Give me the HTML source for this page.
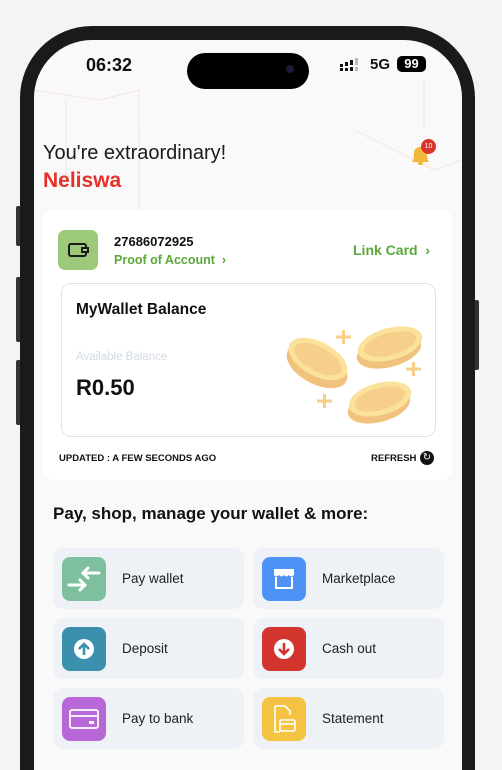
<!DOCTYPE html>
<html style="width:502px;height:770px;overflow:hidden"><head><style>
*{margin:0;padding:0;box-sizing:border-box}
body{width:502px;height:770px;background:#f4f4f4;overflow:hidden;font-family:"Liberation Sans","DejaVu Sans",sans-serif}
#wrap{position:relative;width:502px;height:770px;overflow:hidden}
.frame{position:absolute;left:20px;top:26px;width:455px;height:744px;background:#1a1a1a;border-radius:72px 72px 0 0;}
.screen{position:absolute;left:34px;top:40px;width:428px;height:730px;background:#f9f9f9;border-radius:58px 58px 0 0;overflow:hidden}
.btn{position:absolute;background:#333;width:5px;border-radius:2px}
.a{position:absolute}
.tile{position:absolute;width:191px;height:61px;background:#eef1f5;border-radius:10px}
.tile .ic{position:absolute;left:9px;top:9px;width:44px;height:44px;border-radius:8px}
.tile .t{position:absolute;left:69px;top:23px;font-size:13.5px;color:#1e1e1e}
</style></head><body><div id="wrap">
<div class="btn" style="left:16px;top:206px;height:40px"></div>
<div class="btn" style="left:16px;top:277px;height:65px"></div>
<div class="btn" style="left:16px;top:360px;height:65px"></div>
<div class="btn" style="left:474px;top:300px;height:70px"></div>
<div class="frame"></div>
<div class="screen">
<svg class="a" style="left:0;top:0" width="428" height="760"><g fill="none" stroke="#f6e6e3" stroke-width="1.2"><path d="M0 50 L65 60 L105 50 M32 60 L32 140 M105 50 L105 170"/><path d="M320 90 L400 130 L428 120 M390 40 L390 90"/></g></svg>
</div>
<div class="a" style="left:86px;top:55px;font-size:18px;font-weight:bold;color:#111">06:32</div>
<div class="a" style="left:187px;top:53px;width:122px;height:36px;background:#000;border-radius:18px"></div>
<div class="a" style="left:286px;top:65px;width:8px;height:8px;background:#1a1a3a;border-radius:50%"></div>
<svg class="a" style="left:340px;top:58px" width="22" height="14"><g fill="#111"><rect x="0" y="6" width="3" height="3"/><rect x="0" y="10" width="3" height="3"/><rect x="5" y="4" width="3" height="4"/><rect x="5" y="10" width="3" height="3"/><rect x="10" y="2" width="3" height="5"/><rect x="10" y="9" width="3" height="4"/></g><g fill="#bbb"><rect x="15" y="0" width="3" height="7"/><rect x="15" y="9" width="3" height="4"/></g></svg>
<div class="a" style="left:370px;top:56px;font-size:15px;font-weight:bold;color:#111">5G</div>
<div class="a" style="left:397px;top:56px;width:29px;height:16px;background:#000;border-radius:5px;color:#fff;font-size:13px;font-weight:bold;text-align:center;line-height:16px">99</div>
<div class="a" style="left:43px;top:142px;font-size:20px;color:#1a1a1a">You're extraordinary!</div>
<div class="a" style="left:43px;top:169px;font-size:21px;font-weight:bold;color:#e8302a">Neliswa</div>
<svg class="a" style="left:408px;top:142px" width="26" height="26"><path d="M4 20 Q6 18 6 12 Q6 5 12.5 5 Q19 5 19 12 Q19 18 21 20Z" fill="#f2b63d"/><rect x="10" y="20" width="5" height="3" rx="1.5" fill="#f2b63d"/></svg>
<div class="a" style="left:421px;top:139px;width:15px;height:15px;background:#d9342b;border-radius:50%;color:#fff;font-size:7px;text-align:center;line-height:15px">10</div>
<div class="a" style="left:43px;top:210px;width:409px;height:270px;background:#fff;border-radius:10px"></div>
<div class="a" style="left:58px;top:230px;width:40px;height:40px;background:#9dc97a;border-radius:7px"></div>
<svg class="a" style="left:68px;top:242px" width="22" height="16"><rect x="1" y="2" width="17" height="12" rx="2" fill="none" stroke="#1a1a1a" stroke-width="2"/><path d="M14 6 H20 V10 H14Z" fill="#9dc97a" stroke="#1a1a1a" stroke-width="2"/></svg>
<div class="a" style="left:114px;top:234px;font-size:13px;font-weight:bold;color:#111">27686072925</div>
<div class="a" style="left:114px;top:253px;font-size:12.5px;font-weight:bold;color:#5aa83a">Proof of Account &nbsp;›</div>
<div class="a" style="left:353px;top:242px;font-size:14px;font-weight:bold;color:#5aa83a">Link Card &nbsp;›</div>
<div class="a" style="left:61px;top:283px;width:375px;height:154px;border:1px solid #dde3ea;border-radius:10px;background:#fff"></div>
<div class="a" style="left:76px;top:301px;font-size:15.5px;font-weight:bold;color:#111">MyWallet Balance</div>
<div class="a" style="left:76px;top:351px;font-size:11.5px;color:#d3dae2">Available Balance</div>
<div class="a" style="left:76px;top:375px;font-size:22px;font-weight:bold;color:#111">R0.50</div>
<svg class="a" style="left:285px;top:318px" width="140" height="110"><g fill="#f8cf8a"><path d="M57 12h3v14h-3zM51 17.5h15v3h-15zM127 44h3v14h-3zM121 49.5h15v3h-15zM38 76h3v14h-3zM32 81.5h15v3h-15z"/></g>
<g><ellipse cx="32" cy="48" rx="33" ry="18" transform="rotate(28 32 48)" fill="#f1c27d"/><ellipse cx="33" cy="41" rx="32" ry="17" transform="rotate(28 33 41)" fill="#fbe29a"/><ellipse cx="33" cy="41" rx="26" ry="12" transform="rotate(28 33 41)" fill="#f6cf8a"/></g>
<g><ellipse cx="104" cy="33" rx="33" ry="16" transform="rotate(-15 104 33)" fill="#f1c27d"/><ellipse cx="105" cy="26" rx="33" ry="16" transform="rotate(-15 105 26)" fill="#fbe29a"/><ellipse cx="105" cy="26" rx="27" ry="11" transform="rotate(-15 105 26)" fill="#f6cf8a"/></g>
<g><ellipse cx="94" cy="88" rx="32" ry="16" transform="rotate(-15 94 88)" fill="#f1c27d"/><ellipse cx="95" cy="81" rx="32" ry="16" transform="rotate(-15 95 81)" fill="#fbe29a"/><ellipse cx="95" cy="81" rx="26" ry="11" transform="rotate(-15 95 81)" fill="#f6cf8a"/></g></svg>
<div class="a" style="left:59px;top:453px;font-size:9.5px;font-weight:bold;color:#111">UPDATED : A FEW SECONDS AGO</div>
<div class="a" style="left:371px;top:453px;font-size:9.5px;font-weight:bold;color:#111">REFRESH</div>
<div class="a" style="left:420px;top:451px;width:14px;height:14px;background:#111;border-radius:50%;color:#fff;font-size:10px;text-align:center;line-height:14px">↻</div>
<div class="a" style="left:53px;top:504px;font-size:17px;font-weight:bold;color:#111">Pay, shop, manage your wallet &amp; more:</div>
<div class="tile" style="left:53px;top:548px"><div class="ic" style="background:#7dbf9f"></div><svg class="a" style="left:13px;top:13px" width="36" height="36"><g stroke="#fff" stroke-width="3" fill="none" stroke-linecap="round"><path d="M33 12H17M22 7l-5 5 5 5"/><path d="M3 24H19M14 19l5 5-5 5"/></g></svg><div class="t">Pay wallet</div></div>
<div class="tile" style="left:253px;top:548px"><div class="ic" style="background:#4e92f5"></div><svg class="a" style="left:19px;top:19px" width="24" height="24"><path d="M2 2H22V8Q19 11 17 8Q14 11 12 8Q9 11 7 8Q4 11 2 8Z" fill="#fff"/><path d="M4 10V21H20V10" fill="none" stroke="#fff" stroke-width="2"/></svg><div class="t">Marketplace</div></div>
<div class="tile" style="left:53px;top:618px"><div class="ic" style="background:#3b90ad"></div><svg class="a" style="left:20px;top:20px" width="22" height="22"><circle cx="11" cy="11" r="10" fill="#fff"/><path d="M11 17V6M6 11l5-5 5 5" stroke="#3b90ad" stroke-width="2.6" fill="none"/></svg><div class="t">Deposit</div></div>
<div class="tile" style="left:253px;top:618px"><div class="ic" style="background:#d2352e"></div><svg class="a" style="left:20px;top:20px" width="22" height="22"><circle cx="11" cy="11" r="10" fill="#fff"/><path d="M11 5V16M6 11l5 5 5-5" stroke="#d2352e" stroke-width="2.6" fill="none"/></svg><div class="t">Cash out</div></div>
<div class="tile" style="left:53px;top:688px"><div class="ic" style="background:#b868d6"></div><svg class="a" style="left:16px;top:19px" width="30" height="24"><rect x="1" y="3" width="28" height="18" rx="2" fill="none" stroke="#fff" stroke-width="1.8"/><path d="M1 9H29" stroke="#fff" stroke-width="1.8"/><rect x="20" y="14" width="5" height="3" fill="#fff"/></svg><div class="t">Pay to bank</div></div>
<div class="tile" style="left:253px;top:688px"><div class="ic" style="background:#f5c343"></div><svg class="a" style="left:19px;top:16px" width="26" height="30"><path d="M3 2H13L18 7V11M3 2V28H8" fill="none" stroke="#fff" stroke-width="1.6"/><rect x="8" y="16" width="15" height="11" rx="1.5" fill="none" stroke="#fff" stroke-width="1.6"/><path d="M8 20H23" stroke="#fff" stroke-width="1.6"/></svg><div class="t">Statement</div></div>
</div></body></html>
